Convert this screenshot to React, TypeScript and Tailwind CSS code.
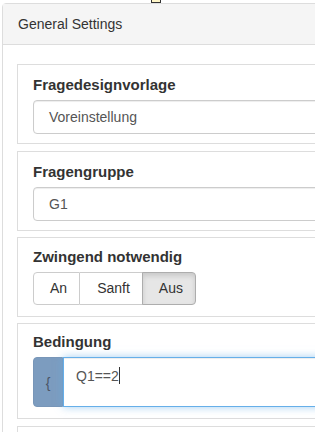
import React from "react";

const font = { fontFamily: '"Liberation Sans", Arial, sans-serif' };

function Card({ label, children, extra = "" }: { label: string; children: React.ReactNode; extra?: string }) {
  return (
    <div className={`border border-[#dddddd] bg-white pl-[15px] ${extra}`}>
      <div className="text-[15px] leading-[20px] font-bold text-[#333333] mb-[5px]">{label}</div>
      {children}
    </div>
  );
}

function TextInput({ value }: { value: string }) {
  return (
    <div className="h-[34px] border border-[#cccccc] rounded-[4px] pl-[15px] pr-[12px] flex items-center text-[14px] text-[#555555] shadow-[inset_0_1px_1px_rgba(0,0,0,0.075)]">
      {value}
    </div>
  );
}

export default function App() {
  return (
    <div className="w-[315px] h-[432px] overflow-hidden bg-white" style={font}>
      <div className="h-[3px] relative">
        <div className="absolute left-[151px] top-[-2px] w-[10px] h-[5px] border border-[#333] bg-[#fff6c8]" />
      </div>
      <div className="ml-[2px] w-[360px] border border-[#dddddd] rounded-tl-[4px]">
        <div className="h-[41px] bg-[#f5f5f5] border-b border-[#dddddd] px-[15px] pt-px flex items-center text-[14px] text-[#333333]">
          General Settings
        </div>
        <div className="pl-[14px] pt-[19px] flex flex-col">
          <Card label="Fragedesignvorlage" extra="pt-[10px] pb-[9px]">
            <TextInput value="Voreinstellung" />
          </Card>
          <Card label="Fragengruppe" extra="mt-[7px] pt-[10px] pb-[9px]">
            <TextInput value="G1" />
          </Card>
          <Card label="Zwingend notwendig" extra="mt-[6px] pt-[9px] pb-[11px]">
            <div className="flex h-[33px] text-[14px] text-[#333333]">
              <div className="pl-[16px] pr-[12px] flex items-center border border-[#cccccc] rounded-l-[4px] bg-white">An</div>
              <div className="pl-[17px] pr-[12px] flex items-center border border-l-0 border-[#cccccc] bg-white">Sanft</div>
              <div className="pl-[16px] pr-[12px] flex items-center border border-[#adadad] -ml-px rounded-r-[4px] bg-[#e6e6e6] shadow-[inset_0_3px_5px_rgba(0,0,0,0.125)]">Aus</div>
            </div>
          </Card>
          <Card label="Bedingung" extra="mt-[6px] pt-[8px] pb-[11px]">
            <div className="flex h-[50px]">
              <div className="w-[30px] bg-[#7c9cbf] border border-[#7896b8] rounded-l-[4px] flex items-center justify-center text-[14px] text-[#4b5566] pt-[2px]">
                {"{"}
              </div>
              <div className="flex-1 border border-[#66afe9] bg-white px-[12px] pt-[8px] text-[14px] text-[#555555] leading-[20px] shadow-[inset_0_1px_1px_rgba(0,0,0,0.075),0_0_8px_rgba(102,175,233,0.6)]">
                Q1==2<span className="inline-block w-px h-[17px] bg-[#333] align-[-3px]" />
              </div>
            </div>
          </Card>
          <div className="mt-[7px] border border-[#dddddd] h-[60px]" />
        </div>
      </div>
    </div>
  );
}
